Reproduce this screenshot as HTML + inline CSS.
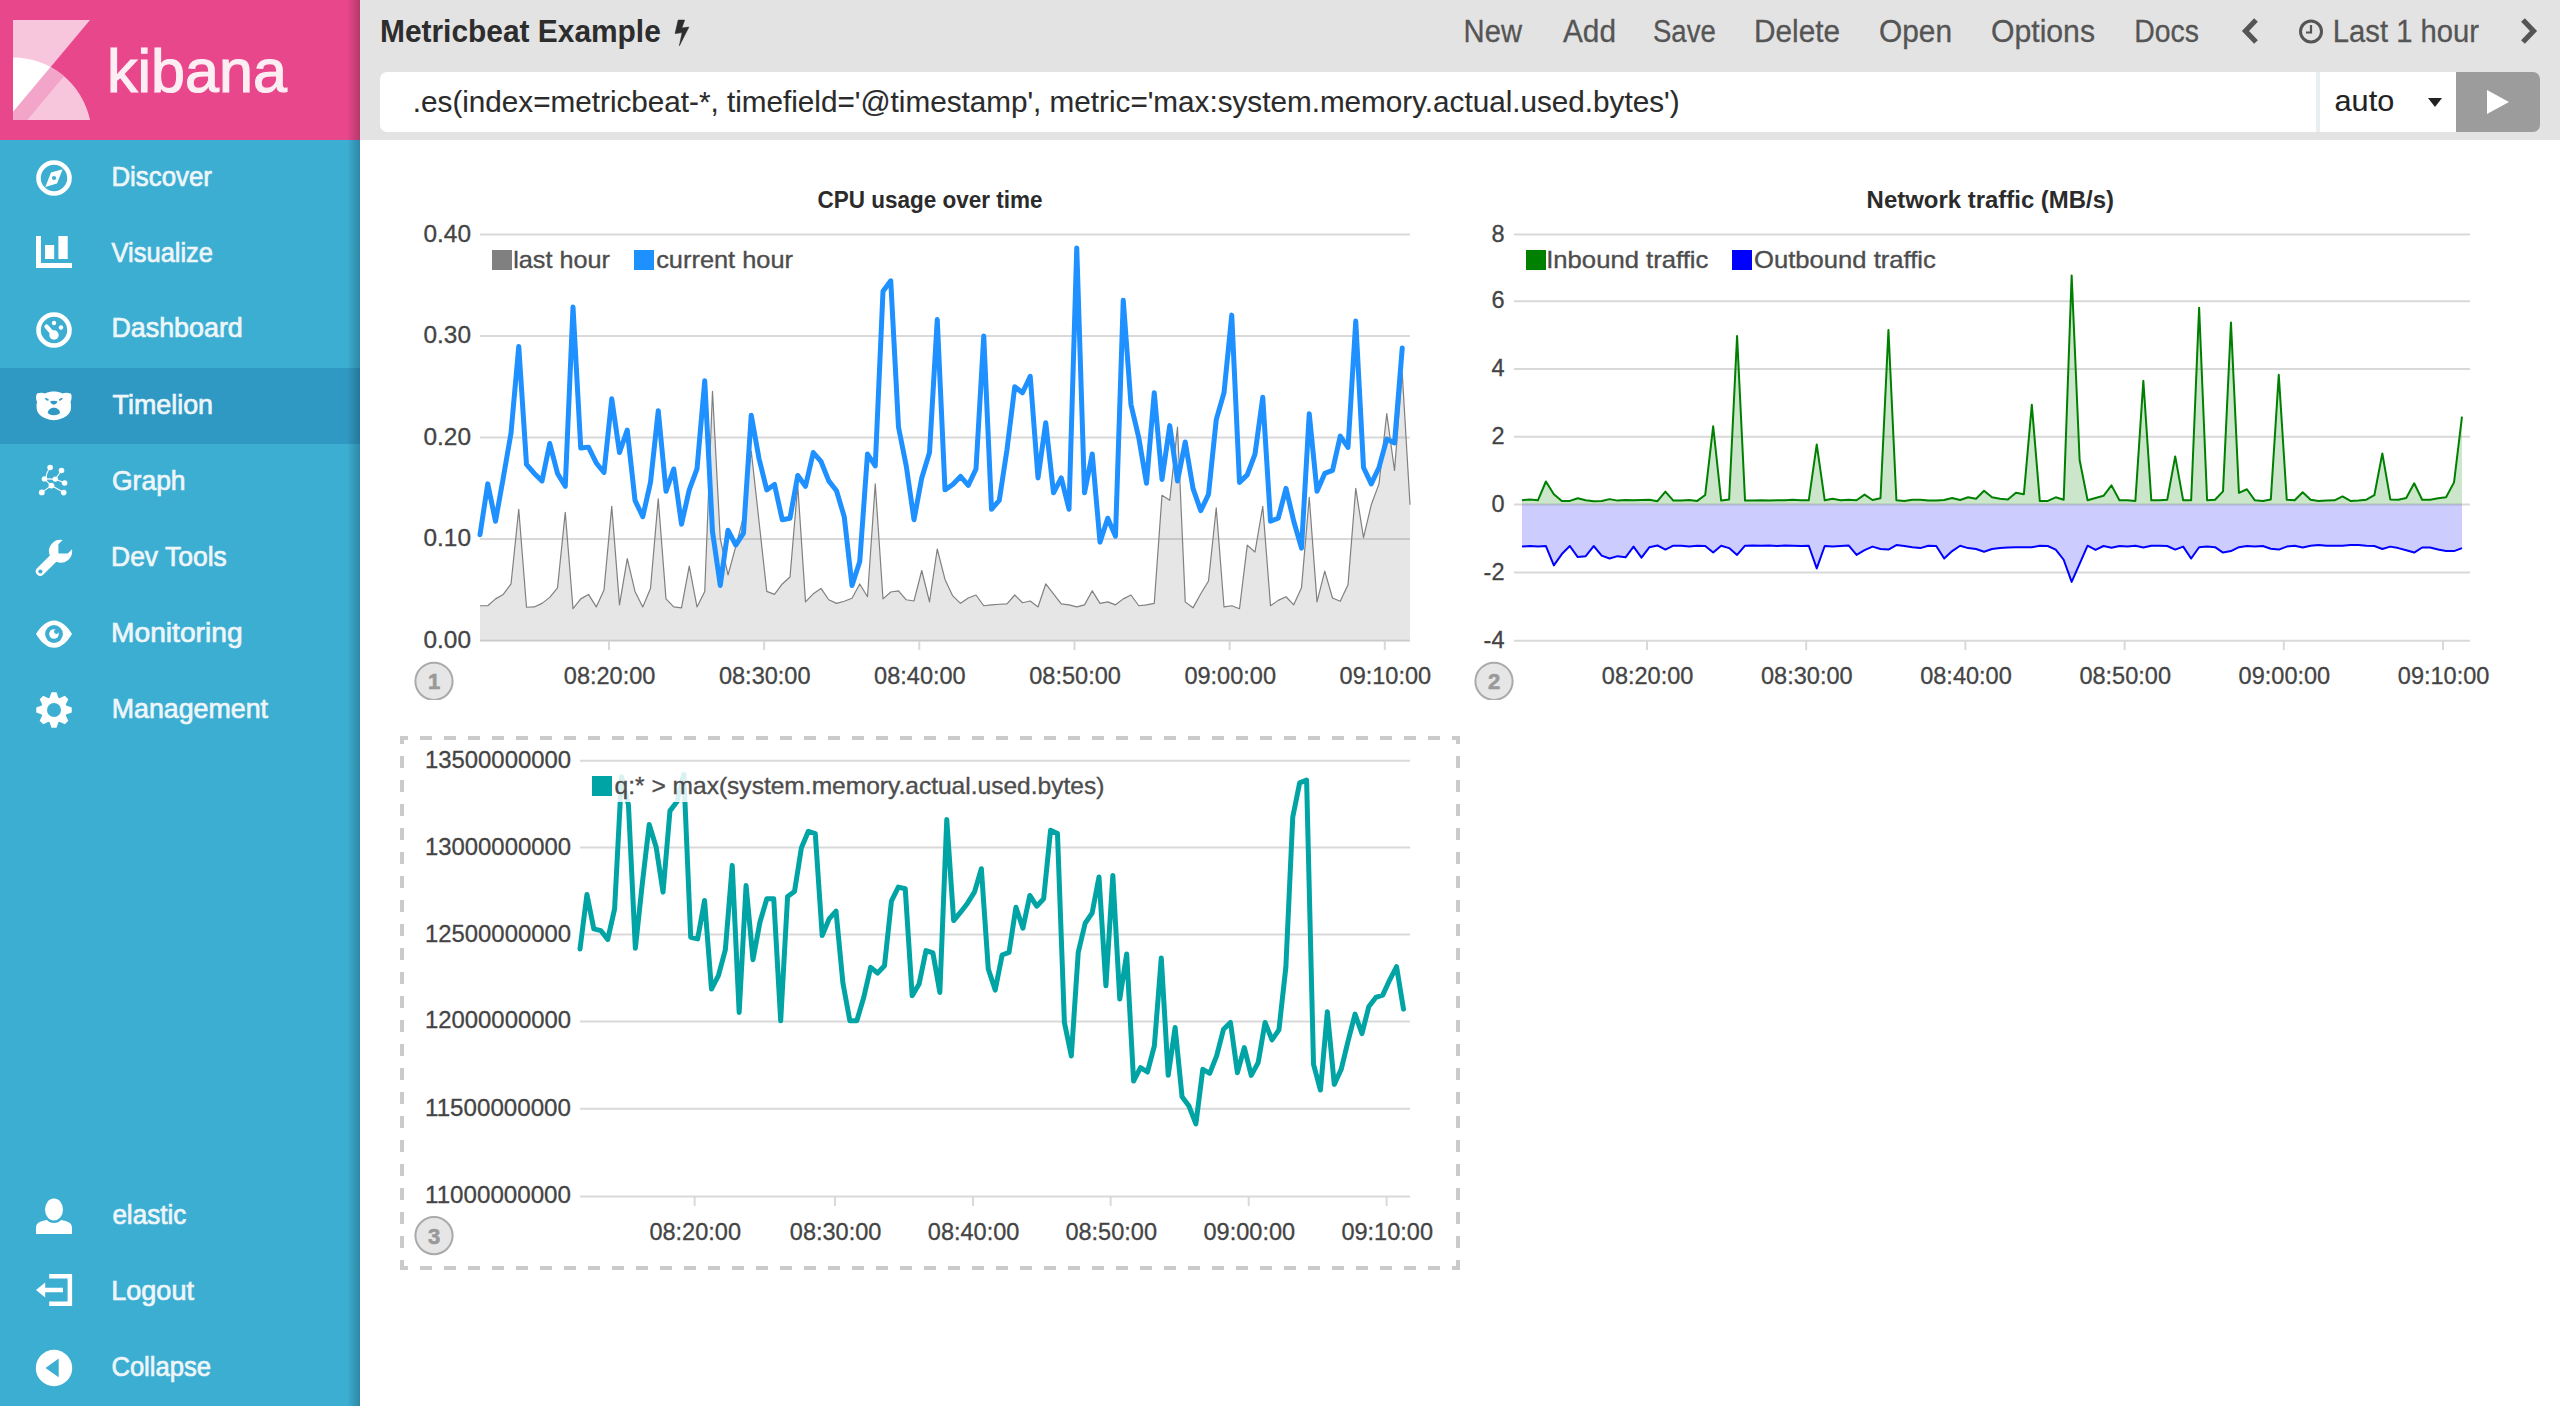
<!DOCTYPE html>
<html><head><meta charset="utf-8">
<style>
html,body{margin:0;padding:0;}
body{width:2560px;height:1406px;overflow:hidden;position:relative;background:#fff;font-family:'Liberation Sans', sans-serif;}
#side{position:absolute;left:0;top:0;width:360px;height:1406px;background:#3caed2;}
#logo{position:absolute;left:0;top:0;width:360px;height:140px;background:#e8488b;}
#active{position:absolute;left:0;top:368px;width:360px;height:76px;background:#2f99c4;}
#shadow{position:absolute;left:340px;top:0;width:20px;height:1406px;background:linear-gradient(to right,rgba(0,0,0,0) 0%,rgba(0,0,0,0) 35%,rgba(0,0,0,0.22) 100%);}
#hdr{position:absolute;left:360px;top:0;width:2200px;height:140px;background:#e3e3e3;}
#inp{position:absolute;left:380px;top:72px;width:1936px;height:60px;background:#fff;border-radius:7px 0 0 7px;}
#sel{position:absolute;left:2320px;top:72px;width:136px;height:60px;background:#fff;}
#selsep{position:absolute;left:2316px;top:72px;width:4px;height:60px;background:#e9eef0;}
#run{position:absolute;left:2456px;top:72px;width:84px;height:60px;background:#9c9c9c;border-radius:0 7px 7px 0;}
svg text{font-family:'Liberation Sans', sans-serif;}
</style></head><body>
<div id="side"></div>
<div id="logo"></div>
<div id="active"></div>
<div id="hdr"></div>
<div id="inp"></div>
<div id="sel"></div>
<div id="selsep"></div>
<div id="run"></div>
<div id="shadow"></div>
<svg width="2560" height="1406" style="position:absolute;left:0;top:0">
<defs><clipPath id="arc"><path d="M13,120 L90,120 A78.7,78.7 0 0 0 13,57.5 Z"/></clipPath></defs>
<polygon points="13,20 90,20 13,112" fill="#f7c6dd"/>
<g clip-path="url(#arc)">
<rect x="13" y="50" width="80" height="70" fill="#f7c6dd"/>
<polygon points="13,20 90,20 13,112" fill="#ffffff"/>
<polygon points="90,20 111,20 27.4,120 6.3,120" fill="#f2a5c9"/>
</g>
<circle cx="54" cy="178" r="15.5" fill="none" stroke="#fff" stroke-width="4.6"/>
<path d="M45.3,187 L51,172.6 L62.7,169.2 L57,183.5 Z" fill="#fff"/><circle cx="54" cy="178" r="2.1" fill="#3caed2"/>
<rect x="36" y="236" width="5" height="32" fill="#fff"/><rect x="36" y="263" width="36" height="5" fill="#fff"/>
<rect x="45" y="245" width="9.2" height="14" fill="#fff"/><rect x="58.4" y="236" width="9.3" height="23" fill="#fff"/>
<circle cx="54" cy="330" r="15.5" fill="none" stroke="#fff" stroke-width="4.6"/>
<line x1="46.5" y1="326.5" x2="54" y2="335" stroke="#fff" stroke-width="4.2" stroke-linecap="round"/>
<circle cx="54" cy="335" r="4.7" fill="#fff"/><circle cx="54" cy="323" r="2.2" fill="#fff"/><circle cx="61" cy="327.5" r="2.2" fill="#fff"/>
<path d="M37,393.5 C40,392.5 43,392.5 45,393.5 C48,392 51,391.6 53.8,391.6 C56.6,391.6 59.6,392 62.6,393.5 C64.6,392.5 67.6,392.5 71,393.8 C72,396 71.8,399 70.5,402.3 C71.2,404 71.2,407 70.6,410.5 C69.5,414 67,416 63,418 C59,419.8 56,420.2 53.8,420.2 C51.6,420.2 48.6,419.8 44.6,418 C40.6,416 38,414 37,410.5 C36.4,407 36.4,404 37.1,402.3 C35.8,399 35.6,396 37,393.5 Z" fill="#fff"/>
<path d="M45.2,398.3 C46.5,398.4 47.8,399 48.6,399.9 C47.3,400.6 46,400.1 45.2,398.3 Z M62.4,398.3 C61.1,398.4 59.8,399 59,399.9 C60.3,400.6 61.6,400.1 62.4,398.3 Z" fill="#2f99c4" stroke="#2f99c4" stroke-width="0.8"/>
<path d="M50.2,401.3 C52,400.6 55.6,400.6 57.4,401.3 C57.2,403 55.6,404.5 53.8,404.8 C52,404.5 50.4,403 50.2,401.3 Z" fill="#2f99c4"/>
<path d="M47.8,412.6 C48.2,409.5 51,407.8 53.9,407.8 C56.8,407.8 59.6,409.5 60,412.6 C59.5,414.6 57,415.2 53.9,415.2 C50.8,415.2 48.3,414.6 47.8,412.6 Z" fill="#2f99c4"/>
<g stroke="#fff" stroke-width="1.1" fill="none"><path d="M50.1,467.5 C47.5,471 46,474 46.2,478"/><line x1="44.4" y1="478.9" x2="51.4" y2="485.6"/><line x1="44.4" y1="478.9" x2="55.3" y2="479.1"/><line x1="55.3" y1="479.1" x2="61.5" y2="470.5"/><line x1="55.3" y1="479.1" x2="64.6" y2="483"/><line x1="51.4" y1="485.6" x2="41.8" y2="492.4"/><line x1="51.4" y1="485.6" x2="63.7" y2="492.6"/></g>
<g fill="#fff"><circle cx="50.1" cy="467.5" r="2.8"/><circle cx="61.5" cy="470.5" r="2.8"/><circle cx="44.4" cy="478.9" r="2.7"/><circle cx="55.3" cy="479.1" r="2.7"/><circle cx="64.6" cy="483" r="2.8"/><circle cx="51.4" cy="485.6" r="2.9"/><circle cx="41.8" cy="492.4" r="2.9"/><circle cx="63.7" cy="492.6" r="2.8"/></g>
<path d="M62.7,540 A11.4,11.4 0 0 0 49.9,555.6 L36.8,568.4 A4.55,4.55 0 0 0 43.2,574.8 L56.3,561.7 A11.4,11.4 0 0 0 72,549.2 L67.7,553.5 L58.4,553.5 L58.4,544.2 Z" fill="#fff"/><circle cx="40.4" cy="571.5" r="2.1" fill="#3caed2"/>
<path d="M36,634 C40,627 46.5,620.4 54,620.4 C61.5,620.4 68,627 72,634 C68,641 61.5,647.8 54,647.8 C46.5,647.8 40,641 36,634 Z" fill="#fff"/>
<circle cx="54" cy="634" r="8.9" fill="#3caed2"/><circle cx="54" cy="634" r="4.8" fill="#fff"/><circle cx="56.4" cy="631.6" r="2.4" fill="#3caed2"/>
<polygon points="49.55,697.78 51.51,692.27 56.49,692.27 58.45,697.78 59.49,698.22 64.77,695.70 68.30,699.23 65.78,704.51 66.22,705.55 71.73,707.51 71.73,712.49 66.22,714.45 65.78,715.49 68.30,720.77 64.77,724.30 59.49,721.78 58.45,722.22 56.49,727.73 51.51,727.73 49.55,722.22 48.51,721.78 43.23,724.30 39.70,720.77 42.22,715.49 41.78,714.45 36.27,712.49 36.27,707.51 41.78,705.55 42.22,704.51 39.70,699.23 43.23,695.70 48.51,698.22" fill="#fff"/><circle cx="54" cy="710" r="7" fill="#3caed2"/>
<ellipse cx="54" cy="1209.5" rx="9" ry="11" fill="#fff"/><path d="M36,1234 L72,1234 L72,1228 C72,1223 68,1221 61,1220 C59.5,1222 57,1223 54,1223 C51,1223 48.5,1222 47,1220 C40,1221 36,1223 36,1228 Z" fill="#fff"/>
<path d="M49.2,1274 L72.1,1274 L72.1,1306 L49.2,1306 L49.2,1301.5 L67.6,1301.5 L67.6,1278.5 L49.2,1278.5 Z" fill="#fff"/>
<path d="M36,1290 L45.2,1282.6 L45.2,1287.8 L63,1287.8 L63,1292.3 L45.2,1292.3 L45.2,1297.4 Z" fill="#fff"/>
<circle cx="54" cy="1368" r="18.2" fill="#fff"/><polygon points="45.5,1368 58.7,1358.6 58.7,1377.3" fill="#3caed2"/>
<path d="M678.2,20.1 L684.6,20.1 L681.9,27.9 L688.9,27.1 L679.4,45.7 L682.1,32.6 L675.1,33.6 Z" fill="#2d2d2d" stroke="#2d2d2d" stroke-width="0.6" stroke-linejoin="round"/>
<g stroke="#cacaca" stroke-width="4" stroke-dasharray="12 12" stroke-dashoffset="4"><line x1="400" y1="738" x2="1460" y2="738"/><line x1="400" y1="1268" x2="1460" y2="1268"/><line x1="402" y1="736" x2="402" y2="1270"/><line x1="1458" y1="736" x2="1458" y2="1270"/></g>
<polyline points="2256,20 2245.5,31 2256,42" fill="none" stroke="#555" stroke-width="5.2"/>
<circle cx="2311" cy="31.5" r="10.5" fill="none" stroke="#555" stroke-width="3"/><polyline points="2311,25 2311,32.5 2306,32.5" fill="none" stroke="#555" stroke-width="2.2"/>
<polyline points="2523,20 2533.5,31 2523,42" fill="none" stroke="#555" stroke-width="5.2"/>
<polygon points="2428,98 2442,98 2435,107" fill="#222"/>
<polygon points="2487,90 2509,102 2487,114" fill="#fff"/>
<line x1="480" y1="234.5" x2="1410" y2="234.5" stroke="#d9d9d9" stroke-width="2"/>
<text x="471.00" y="241.50" font-size="23.50" text-anchor="end" textLength="47.50" lengthAdjust="spacingAndGlyphs" fill="#444" stroke="#444" stroke-width="0.30">0.40</text>
<line x1="480" y1="336.0" x2="1410" y2="336.0" stroke="#d9d9d9" stroke-width="2"/>
<text x="471.00" y="343.00" font-size="23.50" text-anchor="end" textLength="47.50" lengthAdjust="spacingAndGlyphs" fill="#444" stroke="#444" stroke-width="0.30">0.30</text>
<line x1="480" y1="437.5" x2="1410" y2="437.5" stroke="#d9d9d9" stroke-width="2"/>
<text x="471.00" y="444.50" font-size="23.50" text-anchor="end" textLength="47.50" lengthAdjust="spacingAndGlyphs" fill="#444" stroke="#444" stroke-width="0.30">0.20</text>
<line x1="480" y1="539.0" x2="1410" y2="539.0" stroke="#d9d9d9" stroke-width="2"/>
<text x="471.00" y="546.00" font-size="23.50" text-anchor="end" textLength="47.50" lengthAdjust="spacingAndGlyphs" fill="#444" stroke="#444" stroke-width="0.30">0.10</text>
<line x1="480" y1="640.7" x2="1410" y2="640.7" stroke="#d9d9d9" stroke-width="2"/>
<text x="471.00" y="647.70" font-size="23.50" text-anchor="end" textLength="47.50" lengthAdjust="spacingAndGlyphs" fill="#444" stroke="#444" stroke-width="0.30">0.00</text>
<line x1="609.0" y1="641" x2="609.0" y2="650" stroke="#d9d9d9" stroke-width="2"/>
<line x1="764.1" y1="641" x2="764.1" y2="650" stroke="#d9d9d9" stroke-width="2"/>
<line x1="919.3" y1="641" x2="919.3" y2="650" stroke="#d9d9d9" stroke-width="2"/>
<line x1="1074.5" y1="641" x2="1074.5" y2="650" stroke="#d9d9d9" stroke-width="2"/>
<line x1="1229.6" y1="641" x2="1229.6" y2="650" stroke="#d9d9d9" stroke-width="2"/>
<line x1="1384.8" y1="641" x2="1384.8" y2="650" stroke="#d9d9d9" stroke-width="2"/>
<text x="609.60" y="684.00" font-size="23.50" text-anchor="middle" textLength="91.60" lengthAdjust="spacingAndGlyphs" fill="#444" stroke="#444" stroke-width="0.30">08:20:00</text>
<text x="764.75" y="684.00" font-size="23.50" text-anchor="middle" textLength="91.60" lengthAdjust="spacingAndGlyphs" fill="#444" stroke="#444" stroke-width="0.30">08:30:00</text>
<text x="919.90" y="684.00" font-size="23.50" text-anchor="middle" textLength="91.60" lengthAdjust="spacingAndGlyphs" fill="#444" stroke="#444" stroke-width="0.30">08:40:00</text>
<text x="1075.05" y="684.00" font-size="23.50" text-anchor="middle" textLength="91.60" lengthAdjust="spacingAndGlyphs" fill="#444" stroke="#444" stroke-width="0.30">08:50:00</text>
<text x="1230.20" y="684.00" font-size="23.50" text-anchor="middle" textLength="91.60" lengthAdjust="spacingAndGlyphs" fill="#444" stroke="#444" stroke-width="0.30">09:00:00</text>
<text x="1385.35" y="684.00" font-size="23.50" text-anchor="middle" textLength="91.60" lengthAdjust="spacingAndGlyphs" fill="#444" stroke="#444" stroke-width="0.30">09:10:00</text>
<polygon points="480,640.7 480.00,605.75 487.75,605.75 495.50,598.88 503.25,594.40 511.00,583.94 518.75,509.27 526.50,607.24 534.25,606.94 542.00,603.36 549.75,597.38 557.50,587.83 565.25,512.26 573.00,608.73 580.75,598.88 588.50,594.40 596.25,606.94 604.00,589.92 611.75,506.28 619.50,604.85 627.25,558.55 635.00,591.41 642.75,606.94 650.50,588.42 658.25,498.82 666.00,598.88 673.75,606.94 681.50,607.84 689.25,566.02 697.00,606.94 704.75,591.41 712.50,391.29 720.25,538.54 728.00,574.98 735.75,546.61 743.50,516.74 751.25,451.03 759.00,521.22 766.75,591.41 774.50,594.40 782.25,583.94 790.00,577.07 797.75,485.38 805.50,601.86 813.25,593.80 821.00,588.42 828.75,599.77 836.50,603.36 844.25,601.27 852.00,598.28 859.75,583.94 867.50,596.79 875.25,483.88 883.00,598.88 890.75,592.01 898.50,590.81 906.25,599.77 914.00,600.97 921.75,570.50 929.50,601.86 937.25,549.00 945.00,579.46 952.75,595.89 960.50,603.36 968.25,597.98 976.00,594.99 983.75,605.75 991.50,604.85 999.25,604.25 1007.00,603.95 1014.75,594.99 1022.50,602.76 1030.25,600.97 1038.00,606.94 1045.75,583.94 1053.50,593.80 1061.25,603.95 1069.00,604.85 1076.75,606.94 1084.50,604.85 1092.25,590.81 1100.00,603.36 1107.75,601.86 1115.50,604.85 1123.25,598.88 1131.00,594.99 1138.75,605.75 1146.50,604.85 1154.25,603.36 1162.00,495.23 1169.75,500.31 1177.50,427.13 1185.25,601.86 1193.00,607.84 1200.75,593.80 1208.50,580.96 1216.25,507.78 1224.00,606.94 1231.75,605.75 1239.50,608.73 1247.25,545.11 1255.00,551.98 1262.75,506.28 1270.50,605.75 1278.25,600.37 1286.00,596.79 1293.75,604.85 1301.50,587.83 1309.25,497.32 1317.00,601.86 1324.75,571.10 1332.50,597.98 1340.25,601.27 1348.00,584.84 1355.75,488.36 1363.50,537.65 1371.25,504.79 1379.00,483.88 1386.75,413.69 1394.50,470.44 1402.25,373.37 1410.00,504.79 1410,640.7" fill="#808080" fill-opacity="0.2"/>
<polyline points="480.00,605.75 487.75,605.75 495.50,598.88 503.25,594.40 511.00,583.94 518.75,509.27 526.50,607.24 534.25,606.94 542.00,603.36 549.75,597.38 557.50,587.83 565.25,512.26 573.00,608.73 580.75,598.88 588.50,594.40 596.25,606.94 604.00,589.92 611.75,506.28 619.50,604.85 627.25,558.55 635.00,591.41 642.75,606.94 650.50,588.42 658.25,498.82 666.00,598.88 673.75,606.94 681.50,607.84 689.25,566.02 697.00,606.94 704.75,591.41 712.50,391.29 720.25,538.54 728.00,574.98 735.75,546.61 743.50,516.74 751.25,451.03 759.00,521.22 766.75,591.41 774.50,594.40 782.25,583.94 790.00,577.07 797.75,485.38 805.50,601.86 813.25,593.80 821.00,588.42 828.75,599.77 836.50,603.36 844.25,601.27 852.00,598.28 859.75,583.94 867.50,596.79 875.25,483.88 883.00,598.88 890.75,592.01 898.50,590.81 906.25,599.77 914.00,600.97 921.75,570.50 929.50,601.86 937.25,549.00 945.00,579.46 952.75,595.89 960.50,603.36 968.25,597.98 976.00,594.99 983.75,605.75 991.50,604.85 999.25,604.25 1007.00,603.95 1014.75,594.99 1022.50,602.76 1030.25,600.97 1038.00,606.94 1045.75,583.94 1053.50,593.80 1061.25,603.95 1069.00,604.85 1076.75,606.94 1084.50,604.85 1092.25,590.81 1100.00,603.36 1107.75,601.86 1115.50,604.85 1123.25,598.88 1131.00,594.99 1138.75,605.75 1146.50,604.85 1154.25,603.36 1162.00,495.23 1169.75,500.31 1177.50,427.13 1185.25,601.86 1193.00,607.84 1200.75,593.80 1208.50,580.96 1216.25,507.78 1224.00,606.94 1231.75,605.75 1239.50,608.73 1247.25,545.11 1255.00,551.98 1262.75,506.28 1270.50,605.75 1278.25,600.37 1286.00,596.79 1293.75,604.85 1301.50,587.83 1309.25,497.32 1317.00,601.86 1324.75,571.10 1332.50,597.98 1340.25,601.27 1348.00,584.84 1355.75,488.36 1363.50,537.65 1371.25,504.79 1379.00,483.88 1386.75,413.69 1394.50,470.44 1402.25,373.37 1410.00,504.79" fill="none" stroke="#808080" stroke-width="1.2" stroke-linejoin="round"/>
<polyline points="480.00,534.66 487.75,483.88 495.50,521.22 503.25,477.91 511.00,433.11 518.75,346.49 526.50,464.47 534.25,473.43 542.00,480.90 549.75,443.56 557.50,473.43 565.25,486.27 573.00,307.06 580.75,448.04 588.50,447.14 596.25,462.97 604.00,472.53 611.75,398.76 619.50,452.52 627.25,430.12 635.00,500.31 642.75,516.74 650.50,482.39 658.25,410.70 666.00,491.35 673.75,468.95 681.50,524.21 689.25,489.86 697.00,468.95 704.75,380.84 712.50,531.67 720.25,585.44 728.00,530.18 735.75,545.11 743.50,533.17 751.25,415.19 759.00,458.49 766.75,489.86 774.50,484.48 782.25,519.73 790.00,518.23 797.75,475.52 805.50,486.27 813.25,452.52 821.00,461.48 828.75,480.90 836.50,490.75 844.25,516.74 852.00,585.44 859.75,561.54 867.50,454.01 875.25,465.96 883.00,291.23 890.75,280.78 898.50,427.13 906.25,465.96 914.00,519.73 921.75,477.91 929.50,452.52 937.25,319.61 945.00,489.86 952.75,484.48 960.50,476.42 968.25,485.38 976.00,468.95 983.75,336.03 991.50,509.27 999.25,500.31 1007.00,449.53 1014.75,386.81 1022.50,392.78 1030.25,376.36 1038.00,477.91 1045.75,422.65 1053.50,492.84 1061.25,477.91 1069.00,509.27 1076.75,247.92 1084.50,492.84 1092.25,454.01 1100.00,542.13 1107.75,518.23 1115.50,536.15 1123.25,300.19 1131.00,404.73 1138.75,437.59 1146.50,483.29 1154.25,392.78 1162.00,479.40 1169.75,425.64 1177.50,480.90 1185.25,442.07 1193.00,488.36 1200.75,510.76 1208.50,494.34 1216.25,419.67 1224.00,392.78 1231.75,315.13 1239.50,482.39 1247.25,474.92 1255.00,454.01 1262.75,397.26 1270.50,521.22 1278.25,518.23 1286.00,488.36 1293.75,521.22 1301.50,548.10 1309.25,413.69 1317.00,491.35 1324.75,473.43 1332.50,470.44 1340.25,436.09 1348.00,447.44 1355.75,321.10 1363.50,467.46 1371.25,483.88 1379.00,467.46 1386.75,439.08 1394.50,442.96 1402.25,347.98" fill="none" stroke="#1e90ff" stroke-width="5" stroke-linejoin="round" stroke-linecap="round"/>
<rect x="492" y="250" width="20" height="20" fill="#808080"/>
<rect x="634" y="250" width="20" height="20" fill="#1e90ff"/>
<line x1="1514" y1="234.5" x2="2470" y2="234.5" stroke="#d9d9d9" stroke-width="2"/>
<text x="1504.50" y="241.50" font-size="23.50" text-anchor="end" fill="#444" stroke="#444" stroke-width="0.30">8</text>
<line x1="1514" y1="301.2" x2="2470" y2="301.2" stroke="#d9d9d9" stroke-width="2"/>
<text x="1504.50" y="308.20" font-size="23.50" text-anchor="end" fill="#444" stroke="#444" stroke-width="0.30">6</text>
<line x1="1514" y1="368.9" x2="2470" y2="368.9" stroke="#d9d9d9" stroke-width="2"/>
<text x="1504.50" y="375.90" font-size="23.50" text-anchor="end" fill="#444" stroke="#444" stroke-width="0.30">4</text>
<line x1="1514" y1="436.7" x2="2470" y2="436.7" stroke="#d9d9d9" stroke-width="2"/>
<text x="1504.50" y="443.70" font-size="23.50" text-anchor="end" fill="#444" stroke="#444" stroke-width="0.30">2</text>
<line x1="1514" y1="504.5" x2="2470" y2="504.5" stroke="#d9d9d9" stroke-width="2"/>
<text x="1504.50" y="511.50" font-size="23.50" text-anchor="end" fill="#444" stroke="#444" stroke-width="0.30">0</text>
<line x1="1514" y1="572.5" x2="2470" y2="572.5" stroke="#d9d9d9" stroke-width="2"/>
<text x="1504.50" y="579.50" font-size="23.50" text-anchor="end" fill="#444" stroke="#444" stroke-width="0.30">-2</text>
<line x1="1514" y1="640.7" x2="2470" y2="640.7" stroke="#d9d9d9" stroke-width="2"/>
<text x="1504.50" y="647.70" font-size="23.50" text-anchor="end" fill="#444" stroke="#444" stroke-width="0.30">-4</text>
<line x1="1647.0" y1="641" x2="1647.0" y2="650" stroke="#d9d9d9" stroke-width="2"/>
<line x1="1806.2" y1="641" x2="1806.2" y2="650" stroke="#d9d9d9" stroke-width="2"/>
<line x1="1965.4" y1="641" x2="1965.4" y2="650" stroke="#d9d9d9" stroke-width="2"/>
<line x1="2124.6" y1="641" x2="2124.6" y2="650" stroke="#d9d9d9" stroke-width="2"/>
<line x1="2283.8" y1="641" x2="2283.8" y2="650" stroke="#d9d9d9" stroke-width="2"/>
<line x1="2443.0" y1="641" x2="2443.0" y2="650" stroke="#d9d9d9" stroke-width="2"/>
<text x="1647.60" y="684.00" font-size="23.50" text-anchor="middle" textLength="91.60" lengthAdjust="spacingAndGlyphs" fill="#444" stroke="#444" stroke-width="0.30">08:20:00</text>
<text x="1806.80" y="684.00" font-size="23.50" text-anchor="middle" textLength="91.60" lengthAdjust="spacingAndGlyphs" fill="#444" stroke="#444" stroke-width="0.30">08:30:00</text>
<text x="1966.00" y="684.00" font-size="23.50" text-anchor="middle" textLength="91.60" lengthAdjust="spacingAndGlyphs" fill="#444" stroke="#444" stroke-width="0.30">08:40:00</text>
<text x="2125.20" y="684.00" font-size="23.50" text-anchor="middle" textLength="91.60" lengthAdjust="spacingAndGlyphs" fill="#444" stroke="#444" stroke-width="0.30">08:50:00</text>
<text x="2284.40" y="684.00" font-size="23.50" text-anchor="middle" textLength="91.60" lengthAdjust="spacingAndGlyphs" fill="#444" stroke="#444" stroke-width="0.30">09:00:00</text>
<text x="2443.60" y="684.00" font-size="23.50" text-anchor="middle" textLength="91.60" lengthAdjust="spacingAndGlyphs" fill="#444" stroke="#444" stroke-width="0.30">09:10:00</text>
<polygon points="1522,504.5 1522.00,500.31 1529.97,499.41 1537.93,500.31 1545.90,481.49 1553.86,494.34 1561.83,500.91 1569.80,500.91 1577.76,498.22 1585.73,500.31 1593.69,501.21 1601.66,500.91 1609.63,499.12 1617.59,500.61 1625.56,500.01 1633.52,500.31 1641.49,500.01 1649.46,499.71 1657.42,501.21 1665.39,491.65 1673.35,500.61 1681.32,500.61 1689.29,500.01 1697.25,500.91 1705.22,494.93 1713.18,426.24 1721.15,500.61 1729.12,499.41 1737.08,336.03 1745.05,500.61 1753.01,500.61 1760.98,500.31 1768.95,500.61 1776.91,500.31 1784.88,500.31 1792.84,499.71 1800.81,500.31 1808.78,500.31 1816.74,444.46 1824.71,500.31 1832.67,498.82 1840.64,500.31 1848.61,499.71 1856.57,500.31 1864.54,494.64 1872.50,500.01 1880.47,498.22 1888.44,330.06 1896.40,500.31 1904.37,500.91 1912.33,499.71 1920.30,499.71 1928.27,500.61 1936.23,500.61 1944.20,500.01 1952.16,497.92 1960.13,500.01 1968.10,497.32 1976.06,498.82 1984.03,490.75 1991.99,497.32 1999.96,498.82 2007.93,499.41 2015.89,492.84 2023.86,494.34 2031.82,404.73 2039.79,500.91 2047.76,500.91 2055.72,497.32 2063.69,499.71 2071.65,275.40 2079.62,459.99 2087.59,500.31 2095.55,497.92 2103.52,495.83 2111.48,485.38 2119.45,500.31 2127.42,500.31 2135.38,500.91 2143.35,380.84 2151.31,500.31 2159.28,500.31 2167.25,499.71 2175.21,456.40 2183.18,500.31 2191.14,500.31 2199.11,307.66 2207.08,500.31 2215.04,499.71 2223.01,491.35 2230.97,322.59 2238.94,492.84 2246.91,489.26 2254.87,500.31 2262.84,500.91 2270.80,499.41 2278.77,374.86 2286.74,499.71 2294.70,500.31 2302.67,492.25 2310.63,499.71 2318.60,500.91 2326.57,500.61 2334.53,500.31 2342.50,496.43 2350.46,500.91 2358.43,500.61 2366.40,499.71 2374.36,495.23 2382.33,453.42 2390.29,499.41 2398.26,499.71 2406.23,497.92 2414.19,483.29 2422.16,499.71 2430.12,499.71 2438.09,498.22 2446.06,497.32 2454.02,482.39 2461.99,416.68 2462,504.5" fill="#008000" fill-opacity="0.2"/>
<polygon points="1522,504.5 1522.00,546.61 1529.97,546.01 1537.93,546.61 1545.90,546.01 1553.86,565.42 1561.83,554.07 1569.80,546.01 1577.76,557.06 1585.73,556.16 1593.69,546.01 1601.66,555.57 1609.63,558.55 1617.59,556.16 1625.56,557.36 1633.52,546.61 1641.49,557.66 1649.46,547.20 1657.42,545.41 1665.39,549.59 1673.35,545.71 1681.32,545.71 1689.29,546.61 1697.25,545.71 1705.22,546.01 1713.18,552.58 1721.15,545.71 1729.12,548.10 1737.08,554.97 1745.05,545.71 1753.01,545.41 1760.98,545.71 1768.95,545.41 1776.91,546.01 1784.88,545.41 1792.84,545.71 1800.81,546.01 1808.78,545.71 1816.74,568.41 1824.71,546.01 1832.67,546.61 1840.64,546.01 1848.61,545.41 1856.57,554.97 1864.54,550.19 1872.50,546.61 1880.47,549.00 1888.44,549.59 1896.40,545.11 1904.37,546.01 1912.33,547.20 1920.30,548.10 1928.27,545.71 1936.23,546.01 1944.20,558.55 1952.16,551.09 1960.13,545.71 1968.10,548.10 1976.06,549.00 1984.03,551.68 1991.99,549.00 1999.96,548.10 2007.93,547.50 2015.89,547.20 2023.86,547.20 2031.82,547.20 2039.79,545.71 2047.76,546.01 2055.72,549.59 2063.69,559.75 2071.65,581.85 2079.62,563.93 2087.59,545.71 2095.55,549.89 2103.52,546.01 2111.48,547.80 2119.45,546.01 2127.42,546.61 2135.38,545.71 2143.35,547.50 2151.31,545.71 2159.28,545.71 2167.25,546.01 2175.21,549.59 2183.18,546.61 2191.14,558.55 2199.11,547.20 2207.08,546.61 2215.04,547.20 2223.01,552.58 2230.97,551.09 2238.94,547.20 2246.91,546.01 2254.87,546.61 2262.84,546.01 2270.80,548.70 2278.77,549.59 2286.74,546.61 2294.70,545.71 2302.67,547.50 2310.63,545.71 2318.60,545.11 2326.57,545.71 2334.53,545.71 2342.50,545.71 2350.46,545.11 2358.43,545.11 2366.40,545.71 2374.36,546.01 2382.33,549.00 2390.29,546.61 2398.26,548.10 2406.23,550.19 2414.19,552.58 2422.16,547.50 2430.12,547.50 2438.09,549.59 2446.06,551.09 2454.02,551.09 2461.99,548.10 2462,504.5" fill="#0000ff" fill-opacity="0.2"/>
<polyline points="1522.00,500.31 1529.97,499.41 1537.93,500.31 1545.90,481.49 1553.86,494.34 1561.83,500.91 1569.80,500.91 1577.76,498.22 1585.73,500.31 1593.69,501.21 1601.66,500.91 1609.63,499.12 1617.59,500.61 1625.56,500.01 1633.52,500.31 1641.49,500.01 1649.46,499.71 1657.42,501.21 1665.39,491.65 1673.35,500.61 1681.32,500.61 1689.29,500.01 1697.25,500.91 1705.22,494.93 1713.18,426.24 1721.15,500.61 1729.12,499.41 1737.08,336.03 1745.05,500.61 1753.01,500.61 1760.98,500.31 1768.95,500.61 1776.91,500.31 1784.88,500.31 1792.84,499.71 1800.81,500.31 1808.78,500.31 1816.74,444.46 1824.71,500.31 1832.67,498.82 1840.64,500.31 1848.61,499.71 1856.57,500.31 1864.54,494.64 1872.50,500.01 1880.47,498.22 1888.44,330.06 1896.40,500.31 1904.37,500.91 1912.33,499.71 1920.30,499.71 1928.27,500.61 1936.23,500.61 1944.20,500.01 1952.16,497.92 1960.13,500.01 1968.10,497.32 1976.06,498.82 1984.03,490.75 1991.99,497.32 1999.96,498.82 2007.93,499.41 2015.89,492.84 2023.86,494.34 2031.82,404.73 2039.79,500.91 2047.76,500.91 2055.72,497.32 2063.69,499.71 2071.65,275.40 2079.62,459.99 2087.59,500.31 2095.55,497.92 2103.52,495.83 2111.48,485.38 2119.45,500.31 2127.42,500.31 2135.38,500.91 2143.35,380.84 2151.31,500.31 2159.28,500.31 2167.25,499.71 2175.21,456.40 2183.18,500.31 2191.14,500.31 2199.11,307.66 2207.08,500.31 2215.04,499.71 2223.01,491.35 2230.97,322.59 2238.94,492.84 2246.91,489.26 2254.87,500.31 2262.84,500.91 2270.80,499.41 2278.77,374.86 2286.74,499.71 2294.70,500.31 2302.67,492.25 2310.63,499.71 2318.60,500.91 2326.57,500.61 2334.53,500.31 2342.50,496.43 2350.46,500.91 2358.43,500.61 2366.40,499.71 2374.36,495.23 2382.33,453.42 2390.29,499.41 2398.26,499.71 2406.23,497.92 2414.19,483.29 2422.16,499.71 2430.12,499.71 2438.09,498.22 2446.06,497.32 2454.02,482.39 2461.99,416.68" fill="none" stroke="#008000" stroke-width="2" stroke-linejoin="round"/>
<polyline points="1522.00,546.61 1529.97,546.01 1537.93,546.61 1545.90,546.01 1553.86,565.42 1561.83,554.07 1569.80,546.01 1577.76,557.06 1585.73,556.16 1593.69,546.01 1601.66,555.57 1609.63,558.55 1617.59,556.16 1625.56,557.36 1633.52,546.61 1641.49,557.66 1649.46,547.20 1657.42,545.41 1665.39,549.59 1673.35,545.71 1681.32,545.71 1689.29,546.61 1697.25,545.71 1705.22,546.01 1713.18,552.58 1721.15,545.71 1729.12,548.10 1737.08,554.97 1745.05,545.71 1753.01,545.41 1760.98,545.71 1768.95,545.41 1776.91,546.01 1784.88,545.41 1792.84,545.71 1800.81,546.01 1808.78,545.71 1816.74,568.41 1824.71,546.01 1832.67,546.61 1840.64,546.01 1848.61,545.41 1856.57,554.97 1864.54,550.19 1872.50,546.61 1880.47,549.00 1888.44,549.59 1896.40,545.11 1904.37,546.01 1912.33,547.20 1920.30,548.10 1928.27,545.71 1936.23,546.01 1944.20,558.55 1952.16,551.09 1960.13,545.71 1968.10,548.10 1976.06,549.00 1984.03,551.68 1991.99,549.00 1999.96,548.10 2007.93,547.50 2015.89,547.20 2023.86,547.20 2031.82,547.20 2039.79,545.71 2047.76,546.01 2055.72,549.59 2063.69,559.75 2071.65,581.85 2079.62,563.93 2087.59,545.71 2095.55,549.89 2103.52,546.01 2111.48,547.80 2119.45,546.01 2127.42,546.61 2135.38,545.71 2143.35,547.50 2151.31,545.71 2159.28,545.71 2167.25,546.01 2175.21,549.59 2183.18,546.61 2191.14,558.55 2199.11,547.20 2207.08,546.61 2215.04,547.20 2223.01,552.58 2230.97,551.09 2238.94,547.20 2246.91,546.01 2254.87,546.61 2262.84,546.01 2270.80,548.70 2278.77,549.59 2286.74,546.61 2294.70,545.71 2302.67,547.50 2310.63,545.71 2318.60,545.11 2326.57,545.71 2334.53,545.71 2342.50,545.71 2350.46,545.11 2358.43,545.11 2366.40,545.71 2374.36,546.01 2382.33,549.00 2390.29,546.61 2398.26,548.10 2406.23,550.19 2414.19,552.58 2422.16,547.50 2430.12,547.50 2438.09,549.59 2446.06,551.09 2454.02,551.09 2461.99,548.10" fill="none" stroke="#0000ff" stroke-width="2" stroke-linejoin="round"/>
<rect x="1526" y="250" width="20" height="20" fill="#008000"/>
<rect x="1732" y="250" width="20" height="20" fill="#0000ff"/>
<line x1="580" y1="760.7" x2="1410" y2="760.7" stroke="#d9d9d9" stroke-width="2"/>
<text x="571.00" y="767.70" font-size="23.50" text-anchor="end" textLength="146.00" lengthAdjust="spacingAndGlyphs" fill="#444" stroke="#444" stroke-width="0.30">13500000000</text>
<line x1="580" y1="847.6" x2="1410" y2="847.6" stroke="#d9d9d9" stroke-width="2"/>
<text x="571.00" y="854.60" font-size="23.50" text-anchor="end" textLength="146.00" lengthAdjust="spacingAndGlyphs" fill="#444" stroke="#444" stroke-width="0.30">13000000000</text>
<line x1="580" y1="934.6" x2="1410" y2="934.6" stroke="#d9d9d9" stroke-width="2"/>
<text x="571.00" y="941.60" font-size="23.50" text-anchor="end" textLength="146.00" lengthAdjust="spacingAndGlyphs" fill="#444" stroke="#444" stroke-width="0.30">12500000000</text>
<line x1="580" y1="1021.4" x2="1410" y2="1021.4" stroke="#d9d9d9" stroke-width="2"/>
<text x="571.00" y="1028.40" font-size="23.50" text-anchor="end" textLength="146.00" lengthAdjust="spacingAndGlyphs" fill="#444" stroke="#444" stroke-width="0.30">12000000000</text>
<line x1="580" y1="1108.8" x2="1410" y2="1108.8" stroke="#d9d9d9" stroke-width="2"/>
<text x="571.00" y="1115.80" font-size="23.50" text-anchor="end" textLength="146.00" lengthAdjust="spacingAndGlyphs" fill="#444" stroke="#444" stroke-width="0.30">11500000000</text>
<line x1="580" y1="1196.4" x2="1410" y2="1196.4" stroke="#d9d9d9" stroke-width="2"/>
<text x="571.00" y="1203.40" font-size="23.50" text-anchor="end" textLength="146.00" lengthAdjust="spacingAndGlyphs" fill="#444" stroke="#444" stroke-width="0.30">11000000000</text>
<line x1="694.6" y1="1197" x2="694.6" y2="1206" stroke="#d9d9d9" stroke-width="2"/>
<line x1="835.0" y1="1197" x2="835.0" y2="1206" stroke="#d9d9d9" stroke-width="2"/>
<line x1="973.0" y1="1197" x2="973.0" y2="1206" stroke="#d9d9d9" stroke-width="2"/>
<line x1="1110.6" y1="1197" x2="1110.6" y2="1206" stroke="#d9d9d9" stroke-width="2"/>
<line x1="1248.7" y1="1197" x2="1248.7" y2="1206" stroke="#d9d9d9" stroke-width="2"/>
<line x1="1386.6" y1="1197" x2="1386.6" y2="1206" stroke="#d9d9d9" stroke-width="2"/>
<text x="695.20" y="1240.00" font-size="23.50" text-anchor="middle" textLength="91.60" lengthAdjust="spacingAndGlyphs" fill="#444" stroke="#444" stroke-width="0.30">08:20:00</text>
<text x="835.60" y="1240.00" font-size="23.50" text-anchor="middle" textLength="91.60" lengthAdjust="spacingAndGlyphs" fill="#444" stroke="#444" stroke-width="0.30">08:30:00</text>
<text x="973.60" y="1240.00" font-size="23.50" text-anchor="middle" textLength="91.60" lengthAdjust="spacingAndGlyphs" fill="#444" stroke="#444" stroke-width="0.30">08:40:00</text>
<text x="1111.20" y="1240.00" font-size="23.50" text-anchor="middle" textLength="91.60" lengthAdjust="spacingAndGlyphs" fill="#444" stroke="#444" stroke-width="0.30">08:50:00</text>
<text x="1249.30" y="1240.00" font-size="23.50" text-anchor="middle" textLength="91.60" lengthAdjust="spacingAndGlyphs" fill="#444" stroke="#444" stroke-width="0.30">09:00:00</text>
<text x="1387.20" y="1240.00" font-size="23.50" text-anchor="middle" textLength="91.60" lengthAdjust="spacingAndGlyphs" fill="#444" stroke="#444" stroke-width="0.30">09:10:00</text>
<polyline points="580.00,948.96 586.92,894.46 593.84,928.90 600.76,930.57 607.68,939.60 614.60,908.84 621.52,776.78 628.44,804.86 635.36,948.29 642.28,883.76 649.20,824.59 656.12,846.99 663.04,892.12 669.96,810.88 676.88,801.85 683.80,774.44 690.72,937.26 697.64,938.93 704.56,900.48 711.48,989.08 718.40,975.71 725.32,949.96 732.24,865.38 739.16,1012.48 746.08,885.44 753.00,959.66 759.92,922.21 766.84,898.81 773.76,898.81 780.68,1020.84 787.60,896.47 794.52,891.45 801.44,847.66 808.36,831.27 815.28,833.61 822.20,935.59 829.12,918.87 836.04,911.18 842.96,983.40 849.88,1020.84 856.80,1020.84 863.72,997.44 870.64,967.35 877.56,973.03 884.48,965.68 891.40,901.15 898.32,887.11 905.24,888.78 912.16,995.77 919.08,984.07 926.00,950.63 932.92,952.97 939.84,992.42 946.76,819.57 953.68,920.54 960.60,912.18 967.52,903.16 974.44,892.12 981.36,868.72 988.28,969.02 995.20,990.08 1002.12,954.98 1009.04,952.30 1015.96,907.17 1022.88,928.23 1029.80,895.47 1036.72,906.17 1043.64,898.81 1050.56,830.27 1057.48,833.61 1064.40,1022.51 1071.32,1055.95 1078.24,952.30 1085.16,923.22 1092.08,913.19 1099.00,877.08 1105.92,985.74 1112.84,875.41 1119.76,999.11 1126.68,953.98 1133.60,1081.02 1140.52,1067.65 1147.44,1072.00 1154.36,1045.92 1161.28,957.99 1168.20,1075.34 1175.12,1027.53 1182.04,1096.74 1188.96,1106.10 1195.88,1123.82 1202.80,1069.32 1209.72,1073.33 1216.64,1055.95 1223.56,1029.20 1230.48,1022.51 1237.40,1072.66 1244.32,1047.59 1251.24,1075.34 1258.16,1062.63 1265.08,1022.51 1272.00,1039.90 1278.92,1029.87 1285.84,967.35 1292.76,816.90 1299.68,782.80 1306.60,780.12 1313.52,1064.31 1320.44,1090.05 1327.36,1011.82 1334.28,1084.37 1341.20,1069.32 1348.12,1040.90 1355.04,1014.16 1361.96,1033.55 1368.88,1006.47 1375.80,997.44 1382.72,995.10 1389.64,980.05 1396.56,966.68 1403.48,1009.14" fill="none" stroke="#01a4a4" stroke-width="5" stroke-linejoin="round" stroke-linecap="round"/>
<rect x="589" y="772" width="518" height="30" fill="#fff" fill-opacity="0.85"/>
<rect x="592" y="776" width="20" height="20" fill="#01a4a4"/>
<clipPath id="cl1"><rect x="404" y="651" width="60" height="49"/></clipPath><g clip-path="url(#cl1)">
<circle cx="434.0" cy="681.3" r="18.6" fill="#e6e6e6" stroke="#aaa" stroke-width="2"/>
<text x="434.00" y="689.30" font-size="22.00" font-weight="bold" text-anchor="middle" fill="#999" stroke="#999" stroke-width="0.60">1</text>
</g>
<clipPath id="cl2"><rect x="1464" y="651" width="60" height="49"/></clipPath><g clip-path="url(#cl2)">
<circle cx="1494.0" cy="681.3" r="18.6" fill="#e6e6e6" stroke="#aaa" stroke-width="2"/>
<text x="1494.00" y="689.30" font-size="22.00" font-weight="bold" text-anchor="middle" fill="#999" stroke="#999" stroke-width="0.60">2</text>
</g>
<circle cx="434.0" cy="1235.6" r="18.6" fill="#e6e6e6" stroke="#aaa" stroke-width="2"/>
<text x="434.00" y="1243.60" font-size="22.00" font-weight="bold" text-anchor="middle" fill="#999" stroke="#999" stroke-width="0.60">3</text>
<text x="380.00" y="41.90" font-size="31.00" font-weight="bold" textLength="280.80" lengthAdjust="spacingAndGlyphs" fill="#2d2d2d">Metricbeat Example</text>
<text x="1463.60" y="42.20" font-size="31.00" textLength="58.40" lengthAdjust="spacingAndGlyphs" fill="#555" stroke="#555" stroke-width="0.30">New</text>
<text x="1563.00" y="42.20" font-size="31.00" textLength="53.00" lengthAdjust="spacingAndGlyphs" fill="#555" stroke="#555" stroke-width="0.30">Add</text>
<text x="1653.00" y="42.20" font-size="31.00" textLength="62.80" lengthAdjust="spacingAndGlyphs" fill="#555" stroke="#555" stroke-width="0.30">Save</text>
<text x="1754.00" y="42.20" font-size="31.00" textLength="86.00" lengthAdjust="spacingAndGlyphs" fill="#555" stroke="#555" stroke-width="0.30">Delete</text>
<text x="1879.00" y="42.20" font-size="31.00" textLength="73.00" lengthAdjust="spacingAndGlyphs" fill="#555" stroke="#555" stroke-width="0.30">Open</text>
<text x="1991.00" y="42.20" font-size="31.00" textLength="104.00" lengthAdjust="spacingAndGlyphs" fill="#555" stroke="#555" stroke-width="0.30">Options</text>
<text x="2134.20" y="42.20" font-size="31.00" textLength="64.80" lengthAdjust="spacingAndGlyphs" fill="#555" stroke="#555" stroke-width="0.30">Docs</text>
<text x="2332.80" y="42.20" font-size="31.00" textLength="146.20" lengthAdjust="spacingAndGlyphs" fill="#555" stroke="#555" stroke-width="0.30">Last 1 hour</text>
<text x="412.80" y="111.80" font-size="29.00" textLength="1266.80" lengthAdjust="spacingAndGlyphs" fill="#2b2b2b" stroke="#2b2b2b" stroke-width="0.10">.es(index=metricbeat-*, timefield='@timestamp', metric='max:system.memory.actual.used.bytes')</text>
<text x="2334.60" y="111.40" font-size="29.00" textLength="59.60" lengthAdjust="spacingAndGlyphs" fill="#222" stroke="#222" stroke-width="0.10">auto</text>
<text x="111.40" y="186.10" font-size="27.30" textLength="100.60" lengthAdjust="spacingAndGlyphs" fill="#eef6fa" stroke="#eef6fa" stroke-width="0.70">Discover</text>
<text x="111.60" y="261.60" font-size="27.30" textLength="101.40" lengthAdjust="spacingAndGlyphs" fill="#eef6fa" stroke="#eef6fa" stroke-width="0.70">Visualize</text>
<text x="111.40" y="337.40" font-size="27.30" textLength="131.40" lengthAdjust="spacingAndGlyphs" fill="#eef6fa" stroke="#eef6fa" stroke-width="0.70">Dashboard</text>
<text x="112.60" y="414.00" font-size="27.30" textLength="100.40" lengthAdjust="spacingAndGlyphs" fill="#eef6fa" stroke="#eef6fa" stroke-width="0.70">Timelion</text>
<text x="112.00" y="490.30" font-size="27.30" textLength="73.60" lengthAdjust="spacingAndGlyphs" fill="#eef6fa" stroke="#eef6fa" stroke-width="0.70">Graph</text>
<text x="111.00" y="565.50" font-size="27.30" textLength="115.80" lengthAdjust="spacingAndGlyphs" fill="#eef6fa" stroke="#eef6fa" stroke-width="0.70">Dev Tools</text>
<text x="111.00" y="641.70" font-size="27.30" textLength="131.60" lengthAdjust="spacingAndGlyphs" fill="#eef6fa" stroke="#eef6fa" stroke-width="0.70">Monitoring</text>
<text x="111.80" y="718.00" font-size="27.30" textLength="156.20" lengthAdjust="spacingAndGlyphs" fill="#eef6fa" stroke="#eef6fa" stroke-width="0.70">Management</text>
<text x="112.40" y="1223.80" font-size="27.30" textLength="73.80" lengthAdjust="spacingAndGlyphs" fill="#eef6fa" stroke="#eef6fa" stroke-width="0.70">elastic</text>
<text x="111.20" y="1300.30" font-size="27.30" textLength="82.80" lengthAdjust="spacingAndGlyphs" fill="#eef6fa" stroke="#eef6fa" stroke-width="0.70">Logout</text>
<text x="111.40" y="1375.90" font-size="27.30" textLength="99.60" lengthAdjust="spacingAndGlyphs" fill="#eef6fa" stroke="#eef6fa" stroke-width="0.70">Collapse</text>
<text x="107.00" y="92.20" font-size="61.00" textLength="180.00" lengthAdjust="spacingAndGlyphs" fill="#fdeef4" stroke="#fdeef4" stroke-width="1.20">kibana</text>
<text x="817.40" y="207.70" font-size="23.00" font-weight="bold" textLength="225.20" lengthAdjust="spacingAndGlyphs" fill="#2b2b2b">CPU usage over time</text>
<text x="1866.60" y="207.90" font-size="23.00" font-weight="bold" textLength="247.40" lengthAdjust="spacingAndGlyphs" fill="#2b2b2b">Network traffic (MB/s)</text>
<text x="513.20" y="268.30" font-size="23.80" textLength="96.80" lengthAdjust="spacingAndGlyphs" fill="#4d4d4d" stroke="#4d4d4d" stroke-width="0.35">last hour</text>
<text x="656.20" y="268.30" font-size="23.80" textLength="136.80" lengthAdjust="spacingAndGlyphs" fill="#4d4d4d" stroke="#4d4d4d" stroke-width="0.35">current hour</text>
<text x="1546.20" y="268.30" font-size="23.80" textLength="162.20" lengthAdjust="spacingAndGlyphs" fill="#4d4d4d" stroke="#4d4d4d" stroke-width="0.35">Inbound traffic</text>
<text x="1754.00" y="268.30" font-size="23.80" textLength="181.80" lengthAdjust="spacingAndGlyphs" fill="#4d4d4d" stroke="#4d4d4d" stroke-width="0.35">Outbound traffic</text>
<text x="614.60" y="793.80" font-size="23.80" textLength="489.80" lengthAdjust="spacingAndGlyphs" fill="#4d4d4d" stroke="#4d4d4d" stroke-width="0.35">q:* &gt; max(system.memory.actual.used.bytes)</text>
</svg>
</body></html>
